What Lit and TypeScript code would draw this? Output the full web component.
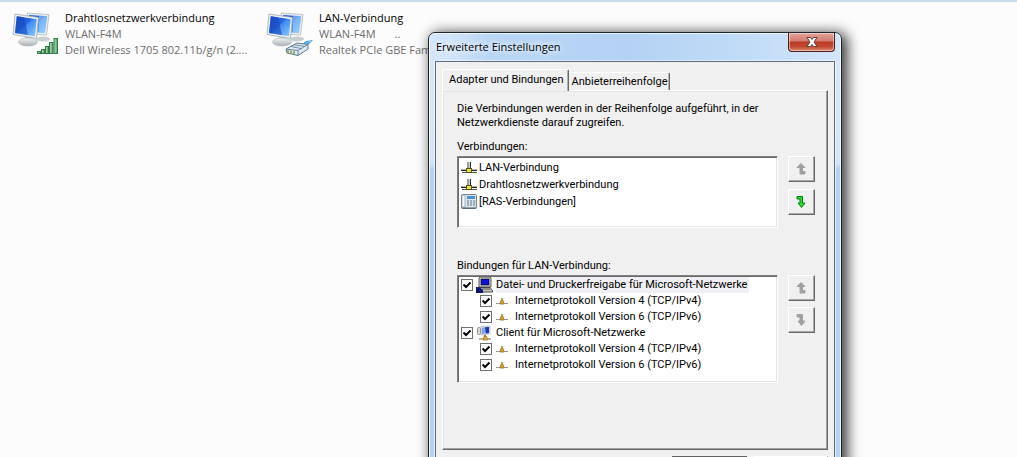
import { LitElement, html, css, svg, nothing } from "lit";
import { customElement, property } from "lit/decorators.js";

@customElement("net-icon")
class NetIcon extends LitElement {
  @property() kind = "wlan";
  static styles = css`
    :host { display: block; flex: none; }
    svg { display: block; }
  `;
  render() {
    return html`<svg width="50" height="48" viewBox="0 0 50 48" aria-hidden="true">
      <defs>
        <linearGradient id="scr" x1="0" y1="0" x2="1" y2="1">
          <stop offset="0" stop-color="#1d55cf" /><stop offset=".45" stop-color="#2468e0" />
          <stop offset=".5" stop-color="#3f8cf2" /><stop offset="1" stop-color="#8ccbf9" />
        </linearGradient>
        <linearGradient id="base" x1="0" y1="0" x2="0" y2="1">
          <stop offset="0" stop-color="#f3f5f6" /><stop offset="1" stop-color="#a9b0b6" />
        </linearGradient>
        <linearGradient id="bar" x1="0" y1="0" x2="1" y2="0">
          <stop offset="0" stop-color="#bfe3c4" /><stop offset="1" stop-color="#4f9d62" />
        </linearGradient>
      </defs>
      <ellipse cx="31" cy="29" rx="7" ry="2.500" fill="#c9ced2" />
      <path d="M15 3 37 4.500 34.500 25 17 24z" fill="#e9edf0" stroke="#b1b8bd" stroke-width=".8" />
      <path d="M17 5 35 6.200 32.800 23 19 22z" fill="url(#scr)" />
      <path d="M27 6 35 6.200 32.800 23 27 22.500z" fill="#9ed0fa" opacity=".6" />
      <path d="M13 26 20 27 20 32 14 32z" fill="#c3c9cd" />
      <ellipse cx="16" cy="32" rx="9.500" ry="4" fill="url(#base)" stroke="#aeb4b8" stroke-width=".6" />
      <path d="M3 4 26.500 7.500 24.500 28.500 1 24.500z" fill="#edf0f2" stroke="#a3abb1" stroke-width=".8" />
      <path d="M4.800 6.200 24.700 9.200 22.900 26.200 3 22.900z" fill="url(#scr)" />
      <path d="M4.800 6.200 12 7.300 16 25 3 22.900z" fill="#1746bd" opacity=".6" />
      ${this.kind === "wlan"
        ? svg`<g fill="url(#bar)" stroke="#2f7a45" stroke-width="1">
            <rect x="25.500" y="41.500" width="3" height="2" /><rect x="29.500" y="39.500" width="3" height="4" />
            <rect x="33.500" y="36.500" width="3" height="7" /><rect x="37.500" y="32.500" width="3.500" height="11" />
            <rect x="42" y="28.500" width="3.500" height="15" /></g>`
        : svg`<path d="M35 35 40 31 47 30 42 35z" fill="#3d9fd0" />
            <path d="M36 35c4-1 5-3 9-4" fill="none" stroke="#8fd4ee" />
            <path d="M20 39 31 33 42 34.500 42 39 32 45.500 21 43z" fill="#dfe9f2" stroke="#5c7894" />
            <path d="M20 39 32 40.500 42 34.500M32 40.500V45M25 36.500 35 38.500M28 34.700 39 36.500" fill="none" stroke="#6d89a5" />
            <path d="M22 40v3M25 40.500v3M28 41v3" stroke="#8b9a45" stroke-width="1.500" />`}
    </svg>`;
  }
}

const adapterIcon = svg`<svg width="16" height="16" viewBox="0 0 16 16" aria-hidden="true">
  <path d="M0 9.500h7M9 9.500h7" stroke="#b5b5aa" /><path d="M0 10.500h16" stroke="#222" />
  <path d="M1 12.500h15" stroke="#55554c" /><path d="M7 2v8M9.500 2v8" stroke="#333" /><path d="M8.200 2v6" stroke="#b9b9b0" />
  <rect x="5.500" y="8.500" width="5" height="4" fill="#e8e23c" stroke="#55551a" /></svg>`;
const rasIcon = svg`<svg width="16" height="16" viewBox="0 0 16 16" aria-hidden="true">
  <rect x=".5" y=".5" width="15" height="14" rx="1" fill="#dbe5ec" stroke="#71808c" />
  <rect x="1" y="1" width="3" height="12" fill="#fafcff" stroke="#8795a2" stroke-width=".7" />
  <rect x="6" y="2" width="8" height="3" fill="#4d92c6" />
  <path d="M6 7h8M6 9h8M6 11h8" stroke="#5d7890" stroke-dasharray="2 1" /><path d="M1 14h14" stroke="#4f5b66" /></svg>`;
const protoIcon = svg`<svg width="12" height="12" viewBox="0 0 12 12" aria-hidden="true">
  <path d="M0 8.500h12" stroke="#9a9a92" stroke-width="1" /><path d="M6 3v3" stroke="#b08a2a" stroke-width="1.500" />
  <path d="M4 9 5 5.500h2L8 9z" fill="#e5a826" stroke="#98701a" stroke-width=".8" /></svg>`;
const shareIcon = svg`<svg width="17" height="16" viewBox="0 0 17 16" aria-hidden="true">
  <path d="M4 0h10l1 1v9H3V1z" fill="#d8d4cc" stroke="#333" stroke-width=".8" />
  <rect x="5" y="2" width="8" height="6" fill="#0a12d6" stroke="#000" stroke-width=".6" />
  <path d="M4 10.500h10l2.500 3V15H6z" fill="#c9c5bd" stroke="#222" stroke-width=".8" />
  <path d="M0 10h3l4 3v3H0z" fill="#0c1478" /><path d="M6 12h8" stroke="#555" /></svg>`;
const clientIcon = svg`<svg width="17" height="16" viewBox="0 0 17 16" aria-hidden="true">
  <rect x="1.500" y="2.500" width="3" height="7" rx="1" fill="#d9ddd5" stroke="#8a9088" />
  <path d="M5 1.500 14 1v8l-9 1z" fill="#e6e9ef" stroke="#a8aeb8" stroke-width=".7" />
  <path d="M6 2.500 13 2v6l-7 1z" fill="#7fa6ea" /><path d="M9 2.300 13 2v6l-3 .4z" fill="#1c34b8" />
  <path d="M3 14h12" stroke="#9b9b90" stroke-width="1.500" /><path d="M9 10v2" stroke="#a37b20" stroke-width="2" />
  <path d="M7 15 8 11.500h2.500L11.500 15z" fill="#e5a826" stroke="#98701a" stroke-width=".7" /></svg>`;

@customElement("move-button")
class MoveButton extends LitElement {
  @property() dir = "up";
  @property({ type: Boolean }) disabled = false;
  static styles = css`
    :host { display: block; }
    button {
      display: grid; place-items: center; width: 27px; height: 26px; padding: 0 2px 0 0; margin: 0;
      background: #f0f0f0; border: 1px solid; border-color: #fff #696969 #696969 #fff;
      box-shadow: inset -1px -1px #a8a8a8;
    }
    svg { fill: #27e02c; stroke: #087a10; }
    .off svg { fill: #a0a0a0; stroke: #a0a0a0; }
  `;
  render() {
    const d = this.dir === "up"
      ? "M5 .5 9 4.500H6.500V8.500H9V11H4V4.500H1z"
      : "M1 .5H6.500V7H9L5.500 11.500 2 7H4V3H1z";
    return html`<button class=${this.disabled ? "off" : ""} ?disabled=${this.disabled}
      aria-label=${this.dir === "up" ? "Nach oben" : "Nach unten"}>
      <svg width="10" height="12" viewBox="0 0 10 12"><path d=${d} /></svg></button>`;
  }
}

const bindings = [
  { id: "b1", level: 0, icon: shareIcon, text: "Datei- und Druckerfreigabe für Microsoft-Netzwerke", sel: true },
  { id: "b2", level: 1, icon: protoIcon, text: "Internetprotokoll Version 4 (TCP/IPv4)" },
  { id: "b3", level: 1, icon: protoIcon, text: "Internetprotokoll Version 6 (TCP/IPv6)" },
  { id: "b4", level: 0, icon: clientIcon, text: "Client für Microsoft-Netzwerke" },
  { id: "b5", level: 1, icon: protoIcon, text: "Internetprotokoll Version 4 (TCP/IPv4)" },
  { id: "b6", level: 1, icon: protoIcon, text: "Internetprotokoll Version 6 (TCP/IPv6)" },
];

@customElement("settings-dialog")
class SettingsDialog extends LitElement {
  static styles = css`
    :host {
      display: block; box-sizing: border-box; padding: 0 6px 7px; color: #000;
      border: 1px solid #1b2530; border-radius: 7px 7px 0 0;
      background:
        linear-gradient(90deg, #d3e5f8 0, #d3e5f8 20px, #b9d6f5 60px, #b3d2f4 200px, #c2dcf7 320px, #d2e5fa 100%) top / 100% 28px no-repeat,
        linear-gradient(180deg, #d8e8f9 0, #d3e5f8 130px, #b4d3f3 136px);
      box-shadow: inset 0 0 0 1px rgba(255,255,255,.75), 4px 2px 14px 1px rgba(0,0,0,.8);
      font: 11px/14px Roboto, "Liberation Sans", sans-serif;
    }
    header { display: flex; justify-content: space-between; height: 28px; }
    h1 { margin: 0; padding: 5px 0 0 1px; font: 11px/18px "Open Sans", "Noto Sans", sans-serif; text-shadow: 0 0 6px #fff, 0 0 6px #fff; }
    .close {
      width: 47px; height: 19px; padding: 0; display: grid; place-items: center;
      border: 1px solid #4b1d1d; border-top: 0; border-radius: 0 0 4px 4px;
      background: linear-gradient(#e2a499 0, #d27b6c 45%, #b93a22 50%, #c14a30 75%, #e08a6a 100%);
      box-shadow: inset 0 0 0 1px rgba(255,255,255,.45);
    }
    .client { background: #f0f0f0; border: 1px solid #5c6b80; box-shadow: 0 0 0 1px rgba(255,255,255,.55); padding: 7px 6px 8px; }
    .tabs { display: flex; align-items: flex-end; }
    .tab {
      margin: 0; padding: 0 1px 0 2px; font: inherit; color: #000; background: #f0f0f0; height: 18px;
      border: 1px solid; border-color: #fff #696969 transparent transparent; border-bottom: 0;
      border-radius: 2px 2px 0 0; box-shadow: inset -1px 0 #b0b0b0;
    }
    .tab.on { height: 22px; padding: 0 4px 2px 6px; border-left-color: #fff; position: relative; margin-bottom: -1px; }
    .page {
      border: 1px solid; border-color: #fff #696969 #696969 #fff;
      box-shadow: inset -1px -1px #a0a0a0, inset 1px 1px #e3e3e3; padding: 11px 12px 66px 14px;
    }
    p { margin: 0 0 10px; }
    .label { margin-bottom: 2px; }
    .row { display: grid; grid-template-columns: 1fr 27px; gap: 10px; }
    .row.first { margin-bottom: 31px; }
    .moves { display: flex; flex-direction: column; gap: 7px; }
    .moves.tight { gap: 6px; }
    ul {
      list-style: none; margin: 0; background: #fff; box-sizing: border-box;
      border: 1px solid; border-color: #808080 #fff #fff #808080;
      box-shadow: inset 1px 1px #696969, inset -1px -1px #e3e3e3;
    }
    .conns { height: 72px; padding: 2px 3px; }
    .conns li { display: flex; align-items: center; gap: 2px; height: 17px; }
    .tree { height: 108px; padding: 1px 3px; }
    .tree li { display: flex; align-items: center; height: 16px; gap: 3px; }
    .tree li.child { padding-left: 19px; gap: 4px; }
    .tree svg { flex: none; }
    .child label { padding-left: 3px; }
    label { padding: 1px 2px 1px 0; white-space: nowrap; }
    label.sel { background: #f0f0f4; }
    input {
      appearance: none; margin: 0; width: 12px; height: 12px; flex: none; border: 1px solid #707070; background: #fff;
    }
    input:checked {
      background: url("data:image/svg+xml,%3Csvg xmlns='http://www.w3.org/2000/svg' viewBox='0 0 10 10'%3E%3Cpath d='M1.500 4.500 4 7 8.500 2.500' fill='none' stroke='%23000' stroke-width='2'/%3E%3C/svg%3E") center / 10px 10px no-repeat #fff;
    }
    footer { display: flex; justify-content: flex-end; gap: 6px; margin-top: 6px; }
    footer button {
      width: 75px; height: 23px; font: inherit; background: #f0f0f0; padding: 0;
      border: 1px solid; border-color: #fff #696969 #696969 #fff; box-shadow: inset -1px -1px #a0a0a0;
    }
    footer .default { border-color: #606060; box-shadow: inset 1px 1px #fff, inset -1px -1px #696969; }
  `;
  render() {
    return html`
      <header>
        <h1>Erweiterte Einstellungen</h1>
        <button class="close" aria-label="Schließen">
          <svg width="14" height="12" viewBox="0 0 14 12">
            <path d="M2 1.500h3.500L7 3.500 8.500 1.500H12L9 6l3 4.500H8.500L7 8.500 5.500 10.500H2L5 6z" fill="#fff" stroke="#64403c" />
          </svg>
        </button>
      </header>
      <div class="client">
        <div class="tabs" role="tablist">
          <button class="tab on" role="tab" aria-selected="true">Adapter und Bindungen</button>
          <button class="tab" role="tab" aria-selected="false">Anbieterreihenfolge</button>
        </div>
        <div class="page" role="tabpanel">
          <p>Die Verbindungen werden in der Reihenfolge aufgeführt, in der<br />Netzwerkdienste darauf zugreifen.</p>
          <div class="label" id="l1">Verbindungen:</div>
          <div class="row first">
            <ul class="conns" aria-labelledby="l1">
              <li>${adapterIcon}<span>LAN-Verbindung</span></li>
              <li>${adapterIcon}<span>Drahtlosnetzwerkverbindung</span></li>
              <li>${rasIcon}<span>[RAS-Verbindungen]</span></li>
            </ul>
            <div class="moves">
              <move-button dir="up" disabled></move-button>
              <move-button dir="down"></move-button>
            </div>
          </div>
          <div class="label" id="l2">Bindungen für LAN-Verbindung:</div>
          <div class="row">
            <ul class="tree" aria-labelledby="l2">
              ${bindings.map((b) => html`<li class=${b.level ? "child" : "parent"}>
                <input type="checkbox" id=${b.id} checked />${b.icon}
                <label for=${b.id} class=${b.sel ? "sel" : nothing}>${b.text}</label></li>`)}
            </ul>
            <div class="moves tight">
              <move-button dir="up" disabled></move-button>
              <move-button dir="down" disabled></move-button>
            </div>
          </div>
        </div>
        <footer>
          <button class="default" aria-label="OK"></button>
          <button aria-label="Abbrechen"></button>
        </footer>
      </div>`;
  }
}

@customElement("app-root")
class AppRoot extends LitElement {
  static styles = css`
    :host {
      display: block; position: relative; height: 100vh; overflow: hidden; box-sizing: border-box;
      background: #fcfcfc; border-top: 2px solid #c9daea;
      font: 11px/16px "Open Sans", "Noto Sans", sans-serif; color: #6d6d6d;
    }
    .items { display: flex; padding: 8px 0 0 12px; }
    .item { display: flex; width: 254px; gap: 3px; }
    .text { white-space: nowrap; }
    .name { color: #000; }
    .dots { padding-left: 19px; }
    settings-dialog { position: absolute; left: 428px; top: 30px; width: 414px; }
  `;
  render() {
    return html`
      <div class="items">
        <div class="item"><net-icon kind="wlan"></net-icon>
          <div class="text"><div class="name">Drahtlosnetzwerkverbindung</div><div>WLAN-F4M</div>
            <div>Dell Wireless 1705 802.11b/g/n (2....</div></div></div>
        <div class="item"><net-icon kind="lan"></net-icon>
          <div class="text"><div class="name">LAN-Verbindung</div><div>WLAN-F4M<span class="dots">..</span></div>
            <div>Realtek PCIe GBE Family</div></div></div>
      </div>
      <settings-dialog role="dialog" aria-label="Erweiterte Einstellungen"></settings-dialog>`;
  }
}
